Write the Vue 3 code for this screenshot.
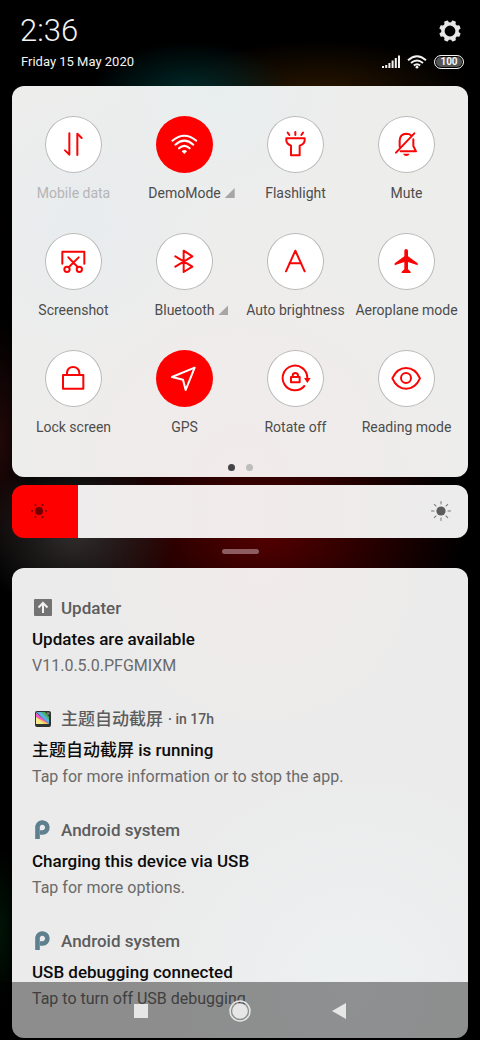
<script setup>
import { ref } from 'vue'

const tiles = ref([
  { id: 'data', label: 'Mobile data', disabled: true },
  { id: 'wifi', label: 'DemoMode', on: true, more: true },
  { id: 'flash', label: 'Flashlight' },
  { id: 'mute', label: 'Mute' },
  { id: 'shot', label: 'Screenshot' },
  { id: 'bt', label: 'Bluetooth', more: true },
  { id: 'auto', label: 'Auto brightness' },
  { id: 'plane', label: 'Aeroplane mode' },
  { id: 'lock', label: 'Lock screen' },
  { id: 'gps', label: 'GPS', on: true },
  { id: 'rotate', label: 'Rotate off' },
  { id: 'read', label: 'Reading mode' }
])

const notes = [
  { icon: 'up', app: 'Updater', title: 'Updates are available', text: 'V11.0.5.0.PFGMIXM' },
  { icon: 'theme', app: '主题自动截屏', time: 'in 17h', title: '主题自动截屏 is running', text: 'Tap for more information or to stop the app.' },
  { icon: 'p', app: 'Android system', title: 'Charging this device via USB', text: 'Tap for more options.' },
  { icon: 'p', app: 'Android system', title: 'USB debugging connected', text: 'Tap to turn off USB debugging' }
]

const brightness = ref(14.4)
</script>

<template>
  <main class="shade">
    <header class="status">
      <div class="row">
        <time class="clock">2:36</time>
        <button class="gear" aria-label="Settings">
          <svg viewBox="0 0 24 24" width="24" height="24">
            <g fill="#e6e6e6">
              <path fill-rule="evenodd" d="M12 3.2a8.8 8.8 0 1 0 0 17.6a8.8 8.8 0 1 0 0-17.6zM12 6.6a5.4 5.4 0 1 1 0 10.8a5.4 5.4 0 1 1 0-10.8z" />
              <path v-for="n in 8" :key="n" d="M9.4 4.6L10 1.6Q10.1 1.2 10.6 1.2H13.4Q13.9 1.2 14 1.6L14.6 4.6z" :transform="`rotate(${n * 45 + 22.5} 12 12)`" />
            </g>
          </svg>
        </button>
      </div>
      <div class="row">
        <span class="date">Friday 15 May 2020</span>
        <div class="signals">
          <svg viewBox="0 0 18 14" width="18" height="14" fill="#f2f2f2">
            <path d="M0 11h2v2H0zM3.2 10h2v3h-2zM6.4 8h2v5h-2zM9.6 5.5h2V13h-2zM12.8 3h2v10h-2zM16 0.500h2V13h-2z" />
          </svg>
          <svg viewBox="0 0 20 14" width="20" height="14" fill="none" stroke="#f2f2f2" stroke-width="1.9">
            <path d="M1 5.200Q10-2.800 19 5.200M4 8Q10 2.800 16 8M6.800 10.500Q10 7.800 13.200 10.500" />
            <circle cx="10" cy="12.200" r="1.400" fill="#f2f2f2" stroke="none" />
          </svg>
          <span class="battery">100</span>
        </div>
      </div>
    </header>

    <section class="panel toggles">
      <div class="grid">
        <button v-for="t in tiles" :key="t.id" class="tile" :class="{ on: t.on, disabled: t.disabled }" @click="t.on = !t.on">
          <span class="disc">
            <svg viewBox="0 0 171 171" class="glyph">
              <path v-if="t.id === 'data'" d="M73 52V116L60 103M97 117V53L110 66" />
              <g v-else-if="t.id === 'wifi'">
                <path d="M49 74Q85 44 121 74M58 86Q85 62 112 86M69 97Q85 82 101 97" />
                <path class="solid" d="M85 114L77 106Q85 98 93 106z" />
              </g>
              <path v-else-if="t.id === 'flash'" d="M85 48V57M62 50L67 57M108 50L103 57M58 67H113V73Q112 84 98 89V118H72V89Q58 84 58 73z" />
              <g v-else-if="t.id === 'mute'">
                <path d="M54 110L109 52M65 92V73Q66 54 85 53Q94 53 99 58M106 70V90L114 106H68" />
                <path class="solid" d="M75 113H95Q92 120 85 120Q78 120 75 113z" />
              </g>
              <g v-else-if="t.id === 'shot'">
                <path d="M52 92V56H118V92M70 73L98 102M101 73L72 102" />
                <circle cx="66" cy="109" r="8" /><circle cx="103" cy="109" r="8" />
              </g>
              <path v-else-if="t.id === 'bt'" d="M58 70L109 101L83 117V53L109 70L58 101" />
              <path v-else-if="t.id === 'auto'" d="M57 115L85 53L113 115M67 91H103" />
              <path v-else-if="t.id === 'plane'" class="solid" d="M84 48Q90 48 90 54V70L119 91V97L90 87V109L98 116V120H71V116L79 109V87L50 97V91L79 70V54Q79 48 84 48z" />
              <path v-else-if="t.id === 'lock'" d="M54 75H115V116H54zM66 74V68Q68 51 84 51Q101 51 103 68V74" />
              <path v-else-if="t.id === 'gps'" d="M116 53L48 81L81 89L89 120z" />
              <g v-else-if="t.id === 'rotate'">
                <path d="M112 108A37 37 0 1 1 121 84M72 81H98V97H72zM77 80V77Q77 69 85 69Q93 69 93 77V80" />
                <path class="solid" d="M111 84H131L121 99z" />
              </g>
              <g v-else>
                <path d="M43 85Q57 54 84 54Q112 54 126 85Q112 116 84 116Q57 116 43 85z" />
                <circle cx="84" cy="84" r="15" />
              </g>
            </svg>
          </span>
          <span class="label">{{ t.label }}<i v-if="t.more" class="corner"></i></span>
        </button>
      </div>
      <div class="dots"><i class="dot active"></i><i class="dot"></i></div>
    </section>

    <label class="slider">
      <input v-model="brightness" type="range" min="0" max="100" step="0.1" aria-label="Brightness" :style="{ '--level': brightness + '%' }" />
      <svg class="sun low" viewBox="0 0 24 24" width="24" height="24" fill="#700000">
        <circle cx="12" cy="12" r="4" />
        <circle v-for="n in 6" :key="n" cx="19" cy="12" r="1" :transform="`rotate(${n * 60} 12 12)`" />
      </svg>
      <svg class="sun high" viewBox="0 0 24 24" width="24" height="24" fill="#5c5c5c" stroke="#777" stroke-linecap="round">
        <circle cx="12" cy="12" r="4.600" stroke="none" />
        <path v-for="n in 8" :key="n" d="M19 12H21.500" :transform="`rotate(${n * 45} 12 12)`" />
      </svg>
    </label>

    <div class="handle"></div>

    <section class="panel notes">
      <article v-for="(n, i) in notes" :key="i" class="note">
        <div class="app">
          <svg v-if="n.icon === 'up'" viewBox="0 0 22 22" width="22" height="22">
            <rect x="2" y="2" width="18" height="17" rx="1" fill="#737373" />
            <path d="M11 16V6M6.500 10.500L11 6L15.500 10.500" fill="none" stroke="#f2f2f2" stroke-width="2" />
          </svg>
          <svg v-else-if="n.icon === 'theme'" viewBox="0 0 22 22" width="22" height="22">
            <rect x="3" y="3" width="16" height="16" rx="2" fill="#2f3330" />
            <path d="M4 5L17 16H4z" fill="#f6c95a" />
            <path d="M4 5L17 16L4 9z" fill="#ee55cf" />
            <path d="M4 4L17 16V9L10 4z" fill="#5caee8" />
            <path d="M9 4L17 12V9L13 4z" fill="#47b35a" />
            <path d="M4 9L12 16H4z" fill="#f2ea8c" />
            <circle cx="16" cy="5.500" r="1.500" fill="#777" />
          </svg>
          <svg v-else viewBox="0 0 22 22" width="22" height="22">
            <path d="M5.500 20V9.500A5 5 0 1 1 10.500 13.500H8" fill="none" stroke="#5d7f8e" stroke-width="4.600" />
          </svg>
          <h2>{{ n.app }}</h2>
          <span v-if="n.time" class="when">· {{ n.time }}</span>
        </div>
        <h3>{{ n.title }}</h3>
        <p>{{ n.text }}</p>
      </article>
    </section>

    <nav class="nav">
      <button aria-label="Recent apps"><svg viewBox="0 0 24 24" width="24" height="24"><path d="M5 5H19V19H5z" fill="#e6e6e6" /></svg></button>
      <button aria-label="Home"><svg viewBox="0 0 24 24" width="24" height="24"><circle cx="12" cy="12" r="10" fill="none" stroke="#e6e6e6" stroke-width="1.500" /><circle cx="12" cy="12" r="7.800" fill="#e6e6e6" /></svg></button>
      <button aria-label="Back"><svg viewBox="0 0 24 24" width="24" height="24"><path d="M5 12L19 4V20z" fill="#e6e6e6" /></svg></button>
    </nav>
  </main>
</template>

<style>
body {
  background: #000;
}
</style>

<style scoped>
.shade {
  position: relative;
  box-sizing: border-box;
  min-height: 100vh;
  padding: 14px 12px 2px;
  font-family: Roboto, "Noto Sans CJK SC", sans-serif;
  background:
    radial-gradient(ellipse 100px 50px at 190px 92px, #002a2a, transparent),
    radial-gradient(ellipse 150px 55px at 320px 95px, #2a1600, transparent),
    radial-gradient(ellipse 100px 80px at 75px 535px, #302c2b, transparent),
    radial-gradient(ellipse 200px 130px at 265px 530px, #560000, transparent),
    radial-gradient(ellipse 30px 120px at 0 440px, #220808, transparent),
    radial-gradient(ellipse 20px 80px at 0 930px, #001406, transparent),
    #000;
}
button {
  padding: 0;
  border: 0;
  background: none;
  font: inherit;
  color: inherit;
}
svg {
  display: block;
}
.status {
  padding: 0 4px 0 8px;
  color: #f4f4f4;
}
.row {
  display: flex;
  align-items: center;
  justify-content: space-between;
}
.clock {
  font-size: 31px;
  line-height: 34px;
  font-weight: 300;
}
.gear {
  margin-right: 2px;
}
.date {
  padding-left: 1px;
  font-size: 13px;
  line-height: 27px;
}
.signals {
  display: flex;
  align-items: center;
  gap: 7px;
}
.battery {
  box-sizing: border-box;
  width: 30px;
  height: 14px;
  border: 1px solid #f2f2f2;
  border-radius: 7px;
  background: #555;
  box-shadow: inset 0 0 0 1px #000;
  font-size: 10px;
  line-height: 12px;
  font-weight: 700;
  text-align: center;
}
.panel {
  border-radius: 12px;
}
.toggles {
  margin-top: 11px;
  padding: 30px 6px 6px;
  background:
    radial-gradient(circle at 45% 0, #e8eeee, transparent 30%),
    radial-gradient(circle at 15% 35%, #e8ecee, transparent 30%),
    radial-gradient(circle at 50% 100%, #f1ebea, transparent 50%),
    #ededec;
}
.grid {
  display: grid;
  grid-template-columns: repeat(4, minmax(0, 1fr));
  row-gap: 30px;
}
.tile {
  display: flex;
  flex-direction: column;
  align-items: center;
  gap: 10px;
  color: #4c4c4c;
}
.tile.disabled {
  color: #b5b5b5;
}
.disc {
  box-sizing: border-box;
  display: flex;
  width: 57px;
  height: 57px;
  border-radius: 50%;
  background: #fff;
  box-shadow: inset 0 0 0 1px #b9b9b9;
}
.glyph {
  width: 57px;
  height: 57px;
  fill: none;
  stroke: #fa0505;
  stroke-width: 6;
  stroke-linecap: round;
  stroke-linejoin: round;
}
.glyph .solid {
  fill: #fa0505;
  stroke: none;
}
.on .disc {
  background: #f00;
  box-shadow: none;
}
.on .glyph {
  stroke: #fff;
}
.on .glyph .solid {
  fill: #fff;
}
.label {
  display: flex;
  align-items: center;
  font-size: 14px;
  line-height: 20px;
  white-space: nowrap;
}
.corner {
  width: 10px;
  height: 10px;
  margin: 0 -14px 0 4px;
  background: #a6a6a6;
  clip-path: polygon(100% 0, 100% 100%, 0 100%);
}
.dots {
  display: flex;
  justify-content: center;
  gap: 11px;
  margin-top: 27px;
}
.dot {
  width: 7px;
  height: 7px;
  border-radius: 50%;
  background: #bdbdbd;
}
.dot.active {
  background: #444;
}
.slider {
  position: relative;
  display: block;
  height: 53px;
  margin-top: 8px;
}
.slider input {
  appearance: none;
  display: block;
  width: 100%;
  height: 100%;
  margin: 0;
  border-radius: 12px;
  background: linear-gradient(90deg, #f00 var(--level), transparent var(--level)), linear-gradient(90deg, #ededed, #f1ebea 50%, #ececec);
}
.slider input::-webkit-slider-thumb {
  appearance: none;
  width: 1px;
  height: 53px;
}
.sun {
  position: absolute;
  top: 14px;
  pointer-events: none;
}
.low {
  left: 15px;
}
.high {
  right: 15px;
}
.handle {
  width: 37px;
  height: 5px;
  margin: 11px auto 14px;
  border-radius: 3px;
  background: #8c5c60;
}
.notes {
  padding: 28px 20px 4px;
  background:
    radial-gradient(circle at 55% 0, #f1ebea, transparent 35%),
    radial-gradient(circle at 75% 90%, #edf1f2, transparent 40%),
    #ebebeb;
}
.note {
  height: 105px;
}
.note + .note {
  margin-top: 6px;
}
.app {
  display: flex;
  align-items: center;
  height: 24px;
  color: #5c5c5c;
}
h2,
h3,
p {
  margin: 0;
}
h2 {
  margin-left: 7px;
  font-size: 17px;
  line-height: 24px;
  font-weight: 500;
}
.when {
  margin-left: 5px;
  font-size: 14px;
  font-weight: 500;
}
h3 {
  margin-top: 6px;
  font-size: 17px;
  line-height: 26px;
  font-weight: 500;
  color: #0c0c0c;
}
p {
  font-size: 16px;
  line-height: 28px;
  color: #6a6a6a;
}
.nav {
  position: absolute;
  right: 0;
  bottom: 0;
  left: 0;
  display: flex;
  align-items: center;
  justify-content: center;
  gap: 75px;
  height: 58px;
  background: rgba(0, 0, 0, 0.4);
}
</style>
